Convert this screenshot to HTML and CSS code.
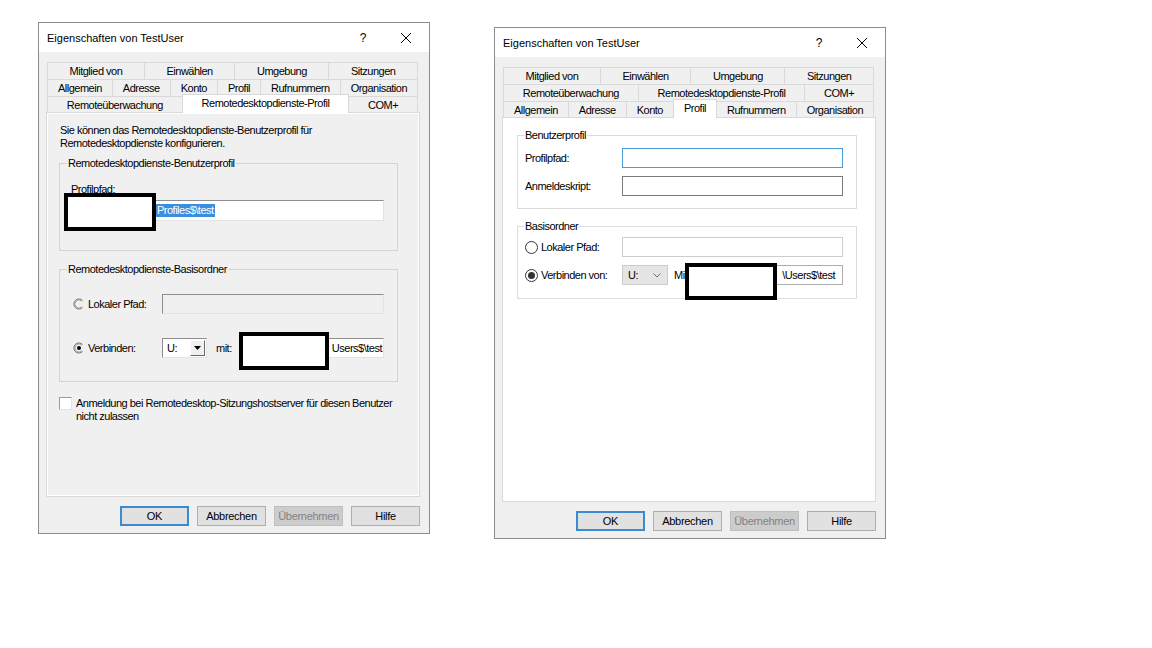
FILE: index.html
```html
<!doctype html>
<html>

<head>
  <meta charset="utf-8">
  <title>Eigenschaften von TestUser</title>
  <link rel="stylesheet" href="styles.css">
</head>

<body>
  <div class="desktop">

    <!-- alter Dialog: Remotedesktopdienste-Profil -->
    <div class="dialog">
      <div class="titlebar">
        <span class="title">Eigenschaften von TestUser</span>
        <span class="caption-btn caption-help">?</span>
        <span class="caption-btn caption-close">
          <svg width="10" height="10" viewBox="0 0 10 10"><path d="M0 0L10 10M10 0L0 10" stroke="#000" stroke-width="1" /></svg>
        </span>
      </div>
      <div class="dialog-body">
        <div class="tabs">
          <div class="tab-row">
            <div class="tab">Mitglied von</div>
            <div class="tab">Einwählen</div>
            <div class="tab">Umgebung</div>
            <div class="tab">Sitzungen</div>
          </div>
          <div class="tab-row">
            <div class="tab">Allgemein</div>
            <div class="tab">Adresse</div>
            <div class="tab">Konto</div>
            <div class="tab">Profil</div>
            <div class="tab">Rufnummern</div>
            <div class="tab">Organisation</div>
          </div>
          <div class="tab-row tab-row-last">
            <div class="tab">Remoteüberwachung</div>
            <div class="tab selected">Remotedesktopdienste-Profil</div>
            <div class="tab">COM+</div>
          </div>
        </div>

        <div class="panel panel-classic">
          <div class="intro">Sie können das Remotedesktopdienste-Benutzerprofil für<br>Remotedesktopdienste konfigurieren.</div>

          <div class="group group-rdprofile">
            <div class="group-title">Remotedesktopdienste-Benutzerprofil</div>
            <div class="field-label">Profilpfad:</div>
            <div class="edit-classic edit-profile">
              <span class="sel-text">Profiles$\test</span>
              <div class="redact redact-profile"></div>
            </div>
          </div>

          <div class="group group-rdhome">
            <div class="group-title">Remotedesktopdienste-Basisordner</div>
            <div class="opt-row opt-row-first">
              <div class="opt-label">
                <svg width="12" height="12" viewBox="0 0 12 12"><path d="M9.5 2.5A5 5 0 1 0 9.5 9.5" fill="none" stroke="#6b6b6b" stroke-width="1" /><path d="M8.8 3.2A4 4 0 1 0 8.8 8.8" fill="none" stroke="#a8a8a8" stroke-width="1" /></svg>
                <span>Lokaler Pfad:</span>
              </div>
              <div class="edit-classic edit-disabled"></div>
            </div>
            <div class="opt-row opt-row-second">
              <div class="opt-label">
                <svg width="12" height="12" viewBox="0 0 12 12"><path d="M9.5 2.5A5 5 0 1 0 9.5 9.5" fill="none" stroke="#6b6b6b" stroke-width="1" /><path d="M8.8 3.2A4 4 0 1 0 8.8 8.8" fill="none" stroke="#a8a8a8" stroke-width="1" /><circle cx="6" cy="6" r="2" fill="#000" /></svg>
                <span>Verbinden:</span>
              </div>
              <div class="combo-classic">
                <span class="combo-value">U:</span>
                <span class="combo-arrow">
                  <svg width="7" height="4" viewBox="0 0 7 4"><path d="M0 0H7L3.5 4Z" fill="#000" /></svg>
                </span>
              </div>
              <span class="mit-label">mit:</span>
              <div class="edit-classic edit-share">
                <span>Users$\test</span>
                <div class="redact redact-share"></div>
              </div>
            </div>
          </div>

          <div class="check-row">
            <span class="check-classic"></span>
            <span>Anmeldung bei Remotedesktop-Sitzungshostserver für diesen Benutzer<br>nicht zulassen</span>
          </div>
        </div>

        <div class="buttons">
          <button type="button" class="btn btn-default">OK</button>
          <button type="button" class="btn">Abbrechen</button>
          <button type="button" class="btn btn-disabled">Übernehmen</button>
          <button type="button" class="btn">Hilfe</button>
        </div>
      </div>
    </div>

    <!-- neuer Dialog: Profil -->
    <div class="dialog dialog-modern">
      <div class="titlebar">
        <span class="title">Eigenschaften von TestUser</span>
        <span class="caption-btn caption-help">?</span>
        <span class="caption-btn caption-close">
          <svg width="10" height="10" viewBox="0 0 10 10"><path d="M0 0L10 10M10 0L0 10" stroke="#000" stroke-width="1" /></svg>
        </span>
      </div>
      <div class="dialog-body">
        <div class="tabs">
          <div class="tab-row">
            <div class="tab">Mitglied von</div>
            <div class="tab">Einwählen</div>
            <div class="tab">Umgebung</div>
            <div class="tab">Sitzungen</div>
          </div>
          <div class="tab-row">
            <div class="tab">Remoteüberwachung</div>
            <div class="tab">Remotedesktopdienste-Profil</div>
            <div class="tab">COM+</div>
          </div>
          <div class="tab-row tab-row-last">
            <div class="tab">Allgemein</div>
            <div class="tab">Adresse</div>
            <div class="tab">Konto</div>
            <div class="tab selected">Profil</div>
            <div class="tab">Rufnummern</div>
            <div class="tab">Organisation</div>
          </div>
        </div>

        <div class="panel panel-modern">
          <div class="group group-userprofile">
            <div class="group-title">Benutzerprofil</div>
            <div class="form-row form-row-first">
              <span class="form-label">Profilpfad:</span>
              <div class="edit-modern edit-focus"></div>
            </div>
            <div class="form-row form-row-second">
              <span class="form-label">Anmeldeskript:</span>
              <div class="edit-modern"></div>
            </div>
          </div>

          <div class="group group-homefolder">
            <div class="group-title">Basisordner</div>
            <div class="form-row form-row-home">
              <span class="form-label radio-label">
                <svg width="13" height="13" viewBox="0 0 13 13"><circle cx="6.5" cy="6.5" r="6" fill="#fff" stroke="#333" stroke-width="1" /></svg>
                <span>Lokaler Pfad:</span>
              </span>
              <div class="edit-modern edit-disabled-modern"></div>
            </div>
            <div class="form-row form-row-second">
              <span class="form-label radio-label">
                <svg width="13" height="13" viewBox="0 0 13 13"><circle cx="6.5" cy="6.5" r="6" fill="#fff" stroke="#333" stroke-width="1" /><circle cx="6.5" cy="6.5" r="3.5" fill="#333" /></svg>
                <span>Verbinden von:</span>
              </span>
              <div class="combo-modern">
                <span>U:</span>
                <svg width="8" height="5" viewBox="0 0 8 5"><path d="M0.5 0.5L4 4L7.5 0.5" fill="none" stroke="#707070" stroke-width="1" /></svg>
              </div>
              <span class="mit-label-modern">Mit:</span>
              <div class="edit-modern edit-share-modern">
                <span>\Users$\test</span>
                <div class="redact redact-share-modern"></div>
              </div>
            </div>
          </div>
        </div>

        <div class="buttons">
          <button type="button" class="btn btn-default">OK</button>
          <button type="button" class="btn">Abbrechen</button>
          <button type="button" class="btn btn-disabled">Übernehmen</button>
          <button type="button" class="btn">Hilfe</button>
        </div>
      </div>
    </div>

  </div>
</body>

</html>
```

FILE: styles.css
```css
body {
  margin: 0;
  background-color: #fff;
  font-family: "Liberation Sans", Arial, sans-serif;
  font-size: 11px;
  letter-spacing: -0.5px;
  color: #000;
}

.desktop {
  display: flex;
  align-items: flex-start;
  gap: 64px;
  padding: 22px 0 0 38px;
}

/* Fenster */
.dialog {
  width: 392px;
  height: 512px;
  box-sizing: border-box;
  border: 1px solid #8c8c8c;
  background-color: #f0f0f0;
}

.dialog-modern {
  margin-top: 5px;
}

.titlebar {
  height: 29px;
  background-color: #fff;
  display: flex;
  align-items: center;
}

.title {
  flex: 1;
  padding-left: 8px;
  font-size: 11px;
  letter-spacing: 0;
}

.caption-btn {
  height: 29px;
  display: flex;
  align-items: center;
  justify-content: center;
}

.caption-help {
  width: 40px;
  font-size: 12px;
  letter-spacing: 0;
}

.caption-close {
  width: 46px;
}

.dialog-body {
  padding: 10px 9px 0 7px;
}

/* Registerkarten */
.tabs {
  margin: 0 2px 0 1px;
}

.tab-row {
  display: flex;
  height: 17px;
}

.tab-row-last {
  height: 16px;
}

.tab {
  flex: 1 1 auto;
  display: flex;
  align-items: center;
  justify-content: center;
  padding: 0 4px;
  border: 1px solid #d9d9d9;
  border-bottom: none;
  margin-left: -1px;
  background-color: #f0f0f0;
  white-space: nowrap;
}

.tab:first-child {
  margin-left: 0;
}

.tab.selected {
  background-color: #fff;
  margin-top: -2px;
  margin-bottom: -1px;
  padding-bottom: 3px;
  position: relative;
  z-index: 1;
}

.panel {
  height: 385px;
  box-sizing: border-box;
  border: 1px solid #d9d9d9;
}

.panel-classic {
  background-color: #f0f0f0;
  box-shadow: inset 0 0 0 1px #fff;
  padding: 11px 0 0 12px;
}

.panel-modern {
  background-color: #fff;
  padding: 17px 0 0 14px;
}

.intro {
  margin-left: 1px;
  line-height: 13px;
}

/* Gruppenfelder */
.group {
  box-sizing: border-box;
  width: 339px;
  border: 1px solid #d3d3d3;
}

.group-title {
  width: max-content;
  margin: -7px 0 0 7px;
  padding: 0 1px;
  line-height: 13px;
}

.panel-classic .group-title {
  background-color: #f0f0f0;
}

.panel-modern .group-title {
  background-color: #fff;
  margin-left: 6px;
}

.group-rdprofile {
  margin-top: 13px;
  height: 88px;
}

.group-rdhome {
  margin-top: 18px;
  height: 113px;
}

.field-label {
  margin: 13px 0 0 11px;
  line-height: 13px;
}

.edit-classic {
  position: relative;
  box-sizing: border-box;
  height: 21px;
  background-color: #fff;
  border: 1px solid;
  border-color: #8e8e8e #e3e3e3 #e3e3e3 #8e8e8e;
  display: flex;
  align-items: center;
}

.edit-profile {
  margin: 4px 13px 0 8px;
  padding-left: 87px;
}

.sel-text {
  background-color: #3a8ee0;
  color: #fff;
  line-height: 13px;
  padding: 0 1px;
}

.edit-disabled {
  flex: 1;
  height: 20px;
  background-color: #f0f0f0;
}

.edit-share {
  flex: 1;
  height: 20px;
  justify-content: flex-end;
  padding-right: 1px;
}

/* Schwaerzungen */
.redact {
  position: absolute;
  box-sizing: border-box;
  border: 4px solid #000;
  background-color: #fff;
}

.redact-profile {
  left: -5px;
  top: -8px;
  width: 92px;
  height: 38px;
}

.redact-share {
  left: -5px;
  top: -7px;
  width: 90px;
  height: 38px;
}

.redact-share-modern {
  left: -6px;
  top: -3px;
  width: 92px;
  height: 37px;
}

/* Optionszeilen (klassisch) */
.opt-row {
  display: flex;
  align-items: center;
  height: 20px;
  margin: 0 13px 0 13px;
}

.opt-row-first {
  margin-top: 18px;
}

.opt-row-second {
  margin-top: 24px;
}

.opt-label {
  width: 89px;
  flex: none;
  display: flex;
  align-items: center;
  gap: 3px;
}

.combo-classic {
  width: 45px;
  height: 20px;
  box-sizing: border-box;
  flex: none;
  background-color: #fff;
  border: 1px solid;
  border-color: #8e8e8e #e3e3e3 #e3e3e3 #8e8e8e;
  display: flex;
  align-items: center;
  justify-content: space-between;
  padding: 1px;
}

.combo-value {
  padding-left: 3px;
}

.combo-arrow {
  width: 15px;
  height: 16px;
  box-sizing: border-box;
  background-color: #f0f0f0;
  border: 1px solid;
  border-color: #fff #6b6b6b #6b6b6b #fff;
  display: flex;
  align-items: center;
  justify-content: center;
}

.mit-label {
  width: 27px;
  flex: none;
  margin-left: 9px;
}

.check-row {
  display: flex;
  align-items: flex-start;
  gap: 4px;
  margin-top: 15px;
  line-height: 13px;
}

.check-classic {
  width: 13px;
  height: 13px;
  box-sizing: border-box;
  flex: none;
  background-color: #fff;
  border: 1px solid;
  border-color: #9a9a9a #e3e3e3 #e3e3e3 #9a9a9a;
}

/* Formularzeilen (Windows 10) */
.group-userprofile,
.group-homefolder {
  width: 340px;
  border-color: #dcdcdc;
}

.group-userprofile {
  height: 74px;
}

.group-homefolder {
  margin-top: 17px;
  height: 73px;
}

.form-row {
  display: flex;
  align-items: center;
  height: 20px;
  margin: 0 13px 0 7px;
}

.form-row-first {
  margin-top: 6px;
}

.form-row-second {
  margin-top: 8px;
}

.form-row-home {
  margin-top: 4px;
}

.form-label {
  width: 97px;
  flex: none;
}

.radio-label {
  display: flex;
  align-items: center;
  gap: 3px;
}

.edit-modern {
  position: relative;
  flex: 1;
  height: 20px;
  box-sizing: border-box;
  border: 1px solid #7a7a7a;
  background-color: #fff;
  display: flex;
  align-items: center;
}

.edit-focus {
  border-color: #4a9bd6;
}

.edit-disabled-modern {
  border-color: #cccccc;
}

.combo-modern {
  width: 46px;
  height: 20px;
  box-sizing: border-box;
  flex: none;
  background-color: #e5e5e5;
  border: 1px solid #cccccc;
  display: flex;
  align-items: center;
  justify-content: space-between;
  padding: 0 6px 0 5px;
}

.mit-label-modern {
  width: 16px;
  flex: none;
  margin-left: 6px;
}

.edit-share-modern {
  justify-content: flex-end;
  padding-right: 7px;
  border-color: #adadad;
}

/* Schaltflaechen */
.buttons {
  display: flex;
  justify-content: flex-end;
  gap: 8px;
  margin-top: 9px;
}

.btn {
  width: 69px;
  height: 20px;
  box-sizing: border-box;
  padding: 0;
  border: 1px solid #adadad;
  background-color: #e1e1e1;
  font-family: inherit;
  font-size: 11px;
  letter-spacing: -0.3px;
  color: #000;
}

.btn-default {
  border-color: #3c8bd0;
  box-shadow: inset 0 0 0 1px #3c8bd0;
}

.btn-disabled {
  background-color: #cccccc;
  border-color: #bfbfbf;
  color: #838383;
}
```
